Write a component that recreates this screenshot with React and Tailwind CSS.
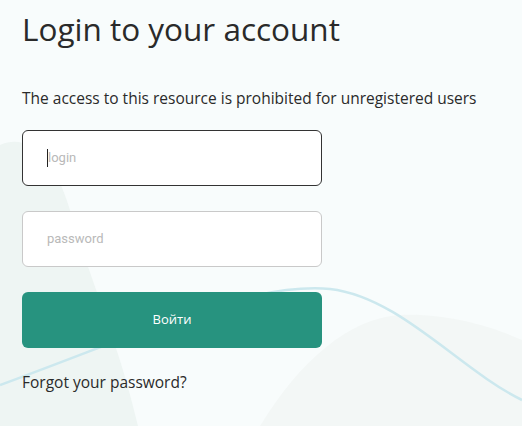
import React from "react";

export default function App() {
  return (
    <div className="relative w-[522px] h-[426px] overflow-hidden bg-[#f8fcfc]" style={{ fontFamily: "'Open Sans', sans-serif" }}>
      <svg className="absolute inset-0" width="522" height="426" viewBox="0 0 522 426">
        <path d="M0,145 C30,132 55,160 70,210 C88,275 118,340 138,426 L0,426 Z" fill="#eef5f3" />
        <path d="M260,426 C300,360 350,318 400,315 C450,313 495,328 522,340 L522,426 Z" fill="#f3f7f6" />
        <path d="M0,385 C150,330 250,282 330,289 C400,297 460,370 522,400" fill="none" stroke="#cce8ee" strokeWidth="2.5" />
      </svg>
      <div className="relative flex flex-col pl-[22px] pt-[9px]">
        <h1 className="text-[31.5px] leading-[40px] text-[#2a2a2a] font-normal">Login to your account</h1>
        <p className="mt-[39px] text-[15.5px] leading-[20px] text-[#2a2a2a]">The access to this resource is prohibited for unregistered users</p>
        <div className="mt-[22px] flex flex-col gap-[25px] w-[300px]">
          <div className="h-[56px] rounded-[6px] border border-[#333] bg-white flex items-center pl-[24px]">
            <span className="w-px h-[18px] bg-[#222]"></span>
            <span className="text-[13px] text-[#b9b9b9]" style={{ fontFamily: "Roboto, sans-serif" }}>login</span>
          </div>
          <div className="h-[56px] rounded-[6px] border border-[#c9c9c9] bg-white flex items-center pl-[24px]">
            <span className="text-[13px] text-[#b9b9b9]" style={{ fontFamily: "Roboto, sans-serif" }}>password</span>
          </div>
          <div className="h-[56px] rounded-[6px] bg-[#27937f] flex items-center justify-center">
            <span className="text-[13px] text-white">Войти</span>
          </div>
        </div>
        <p className="mt-[24px] text-[15.5px] leading-[20px] text-[#2a2a2a]">Forgot your password?</p>
      </div>
    </div>
  );
}
